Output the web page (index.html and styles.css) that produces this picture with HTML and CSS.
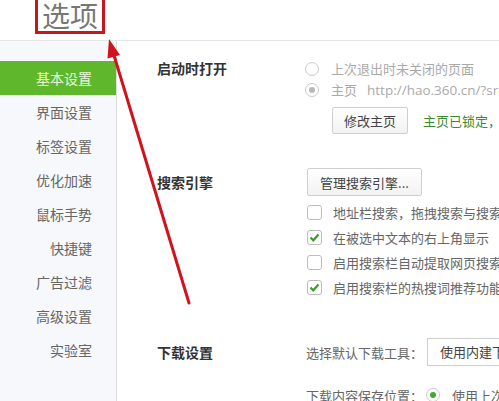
FILE: index.html
```html
<!DOCTYPE html>
<html lang="zh">
<head>
<meta charset="utf-8">
<link rel="stylesheet" href="styles.css">
</head>
<body>
<header class="header">
  <h1 class="title">选项</h1>
</header>
<div class="main">
  <nav class="sidebar">
    <div class="nav-item active">基本设置</div>
    <div class="nav-item">界面设置</div>
    <div class="nav-item">标签设置</div>
    <div class="nav-item">优化加速</div>
    <div class="nav-item">鼠标手势</div>
    <div class="nav-item">快捷键</div>
    <div class="nav-item">广告过滤</div>
    <div class="nav-item">高级设置</div>
    <div class="nav-item">实验室</div>
  </nav>
  <section class="content">
    <div class="section s-startup">
      <div class="label">启动时打开</div>
      <div class="options">
        <div class="row disabled"><span class="radio"></span><span>上次退出时未关闭的页面</span></div>
        <div class="row disabled"><span class="radio checked-gray"></span><span>主页</span><span class="url">http://hao.360.cn/?src=lm&amp;ls=n</span></div>
        <div class="row btn-row"><button class="btn">修改主页</button><span class="locked">主页已锁定，防止被恶意篡改</span></div>
      </div>
    </div>
    <div class="section s-search">
      <div class="label tall">搜索引擎</div>
      <div class="options">
        <div class="row"><button class="btn btn-search">管理搜索引擎...</button></div>
        <div class="checks">
          <div class="check-row"><span class="checkbox"></span><span>地址栏搜索，拖拽搜索与搜索框使用相同的搜索引擎</span></div>
          <div class="check-row"><span class="checkbox on"><svg viewBox="0 0 15 15" width="15" height="15"><path d="M3.5 7.5 L6.3 10.3 L11.5 4.6" fill="none" stroke="#3c9a2c" stroke-width="2.2"/></svg></span><span>在被选中文本的右上角显示 “搜索” 按钮</span></div>
          <div class="check-row"><span class="checkbox"></span><span>启用搜索栏自动提取网页搜索词功能</span></div>
          <div class="check-row"><span class="checkbox on"><svg viewBox="0 0 15 15" width="15" height="15"><path d="M3.5 7.5 L6.3 10.3 L11.5 4.6" fill="none" stroke="#3c9a2c" stroke-width="2.2"/></svg></span><span>启用搜索栏的热搜词推荐功能</span></div>
        </div>
      </div>
    </div>
    <div class="section s-download">
      <div class="label tall">下载设置</div>
      <div class="options">
        <div class="dl-row"><span class="dl-label">选择默认下载工具：</span><span class="select">使用内建下载工具</span></div>
        <div class="dl-row second"><span class="dl-label">下载内容保存位置：</span><span class="radio green"></span><span>使用上次下载目录</span></div>
      </div>
    </div>
  </section>
</div>
<svg class="arrow" width="499" height="401" viewBox="0 0 499 401">
  <line x1="189" y1="303" x2="113" y2="52" stroke="#d0141e" stroke-width="3" stroke-linecap="round"/>
  <polygon points="109,39 120,55 107.5,58.5" fill="#d0141e"/>
</svg>
</body>
</html>
```
FILE: styles.css
```css
* { box-sizing: border-box; }
html, body {
  margin: 0;
  padding: 0;
  width: 499px;
  height: 401px;
  overflow: hidden;
  background: #fff;
  font-family: "Noto Sans CJK SC", "Noto Sans", sans-serif;
}
.header {
  height: 41px;
  border-bottom: 1px solid #e6e6e6;
  display: flex;
  align-items: flex-start;
}
.title {
  margin: 0 0 0 35px;
  padding: 0 4px;
  border: 3px solid #c8161d;
  border-top: 0;
  font-size: 28px;
  line-height: 31px;
  font-weight: 400;
  color: #777;
}
.main {
  display: flex;
  height: 360px;
}
.sidebar {
  width: 117px;
  flex: none;
  background: #f6f8fb;
  border-right: 1px solid #dcdcdc;
  padding-top: 20px;
}
.nav-item {
  height: 34px;
  line-height: 34px;
  text-align: right;
  padding-right: 24px;
  font-size: 14px;
  color: #666;
}
.nav-item.active {
  background: #5fb82b;
  color: #eaf7de;
}
.content {
  flex: 1;
  padding: 17px 0 0 40px;
  white-space: nowrap;
  overflow: hidden;
}
.section {
  display: flex;
}
.label {
  width: 148px;
  flex: none;
  font-size: 14px;
  font-weight: 700;
  color: #333;
  line-height: 21px;
}
.label.tall { line-height: 28px; }
.options { flex: 1; font-size: 13px; color: #666; }
.row {
  display: flex;
  align-items: center;
  height: 21px;
}
.row.disabled { color: #a9a9a9; }
.radio {
  width: 14px;
  height: 14px;
  border: 1px solid #c9c9c9;
  border-radius: 50%;
  background: #fff;
  margin-right: 12px;
  flex: none;
  position: relative;
}
.radio.checked-gray::after,
.radio.green::after {
  content: "";
  position: absolute;
  left: 3px;
  top: 3px;
  width: 6px;
  height: 6px;
  border-radius: 50%;
  background: #b8b8b8;
}
.radio.green::after { background: #3dac2d; }
.url {
  margin-left: 10px;
  font-family: "Open Sans", "Noto Sans", sans-serif;
  font-size: 13.5px;
}
.btn-row {
  height: 27px;
  margin-top: 7px;
  padding-left: 27px;
}
.btn {
  font-family: inherit;
  font-size: 13px;
  color: #444;
  height: 27px;
  padding: 0 11px;
  border: 1px solid #cfcfcf;
  border-radius: 2px;
  background: linear-gradient(#ffffff, #f2f2f2);
}
.locked {
  margin-left: 15px;
  color: #3b8a2e;
}
.s-search { margin-top: 34px; }
.s-search .row { height: 28px; }
.btn-search {
  height: 28px;
  width: 115px;
  margin-left: 2px;
  padding: 0;
}
.checks { margin-top: 4px; }
.check-row {
  height: 25px;
  display: flex;
  align-items: center;
  padding-left: 2px;
}
.checkbox {
  width: 15px;
  height: 15px;
  border: 1px solid #bdbdbd;
  border-radius: 3px;
  background: #fff;
  margin-right: 11px;
  flex: none;
  display: flex;
  align-items: center;
  justify-content: center;
}
.checkbox svg { display: block; margin: -1px; }
.s-download { margin-top: 38px; }
.dl-row {
  display: flex;
  align-items: center;
  height: 28px;
  padding-left: 1px;
}
.dl-row.second { margin-top: 17px; height: 24px; }
.dl-label { width: 121px; flex: none; }
.select {
  height: 28px;
  line-height: 26px;
  border: 1px solid #cfcfcf;
  border-right: none;
  padding-left: 12px;
  flex: 1;
  color: #444;
  background: #fff;
}
.dl-row.second .radio { margin-left: -1px; margin-right: 12px; }
.arrow {
  position: absolute;
  left: 0;
  top: 0;
  pointer-events: none;
}
```
